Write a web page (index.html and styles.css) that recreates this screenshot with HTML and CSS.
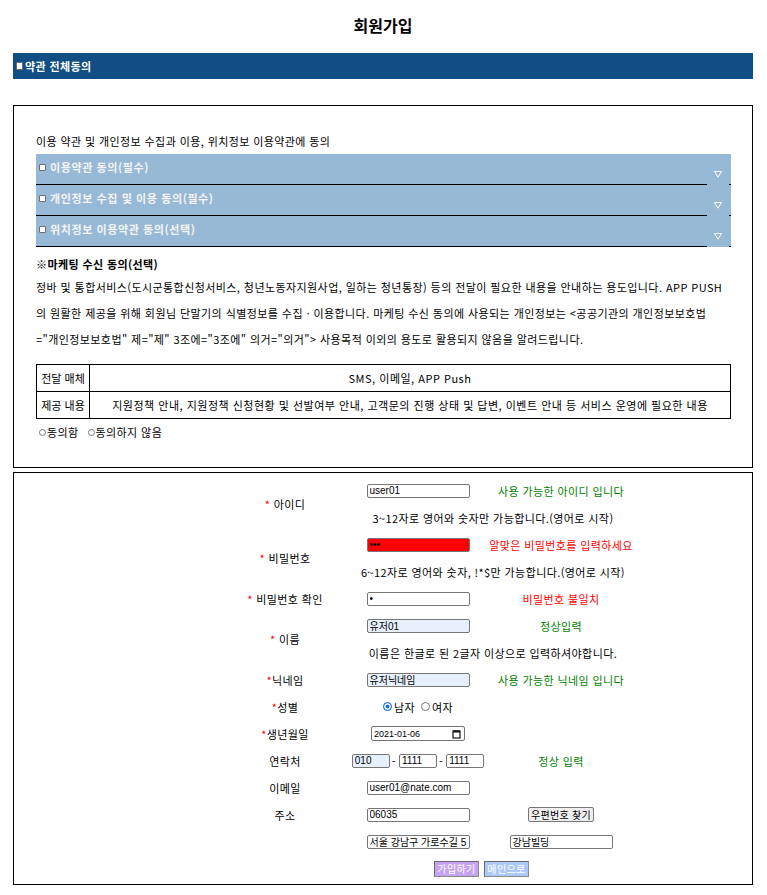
FILE: index.html
```html
<!DOCTYPE html>
<html lang="ko">
<head>
<meta charset="utf-8">
<title>회원가입</title>
<link rel="stylesheet" href="styles.css">
</head>
<body>
<div class="page">
  <h1 class="title">회원가입</h1>

  <div class="allbar">
    <input type="checkbox" class="chk">
    <span>약관 전체동의</span>
  </div>

  <section class="terms">
    <p class="intro">이용 약관 및 개인정보 수집과 이용, 위치정보 이용약관에 동의</p>

    <div class="trow">
      <label class="tlabel"><input type="checkbox" class="chk">이용약관 동의(필수)</label>
      <div class="tarrow"><svg width="8" height="7" viewBox="0 0 8 7"><polygon points="0.5,0.5 7.5,0.5 4,6.2" fill="none" stroke="#ffffff" stroke-width="1"/></svg></div>
    </div>
    <div class="trow">
      <label class="tlabel"><input type="checkbox" class="chk">개인정보 수집 및 이용 동의(필수)</label>
      <div class="tarrow"><svg width="8" height="7" viewBox="0 0 8 7"><polygon points="0.5,0.5 7.5,0.5 4,6.2" fill="none" stroke="#ffffff" stroke-width="1"/></svg></div>
    </div>
    <div class="trow">
      <label class="tlabel"><input type="checkbox" class="chk">위치정보 이용약관 동의(선택)</label>
      <div class="tarrow"><svg width="8" height="7" viewBox="0 0 8 7"><polygon points="0.5,0.5 7.5,0.5 4,6.2" fill="none" stroke="#ffffff" stroke-width="1"/></svg></div>
    </div>

    <p class="mk-title">※마케팅 수신 동의(선택)</p>
    <p class="mk-text">정바 및 통합서비스(도시군통합신청서비스, 청년노동자지원사업, 일하는 청년통장) 등의 전달이 필요한 내용을 안내하는 용도입니다. APP PUSH<br>의 원활한 제공을 위해 회원님 단말기의 식별정보를 수집ㆍ이용합니다. 마케팅 수신 동의에 사용되는 개인정보는 &lt;공공기관의 개인정보보호법<br>="개인정보보호법" 제="제" 3조에="3조에" 의거="의거"&gt; 사용목적 이외의 용도로 활용되지 않음을 알려드립니다.</p>

    <table class="mk-table">
      <tr><th>전달 매체</th><td>SMS, 이메일, APP Push</td></tr>
      <tr><th>제공 내용</th><td>지원정책 안내, 지원정책 신청현황 및 선발여부 안내, 고객문의 진행 상태 및 답변, 이벤트 안내 등 서비스 운영에 필요한 내용</td></tr>
    </table>

    <div class="mk-radio">
      <label><input type="radio" name="mk" class="rad">동의함</label>
      <label><input type="radio" name="mk" class="rad">동의하지 않음</label>
    </div>
  </section>

  <section class="joinbox">
    <div class="fgrid">
      <div class="lbl span2"><span class="req">*</span> 아이디</div>
      <div class="c2"><input type="text" class="inp" value="user01"></div>
      <div class="c3 ok">사용 가능한 아이디 입니다</div>
      <div class="hint">3~12자로 영어와 숫자만 가능합니다.(영어로 시작)</div>

      <div class="lbl span2"><span class="req">*</span> 비밀번호</div>
      <div class="c2"><input type="password" class="inp bad" value="abc"></div>
      <div class="c3 err">알맞은 비밀번호를 입력하세요</div>
      <div class="hint">6~12자로 영어와 숫자, !*$만 가능합니다.(영어로 시작)</div>

      <div class="lbl"><span class="req">*</span> 비밀번호 확인</div>
      <div class="c2"><input type="password" class="inp" value="a"></div>
      <div class="c3 err">비밀번호 불일치</div>

      <div class="lbl span2"><span class="req">*</span> 이름</div>
      <div class="c2"><input type="text" class="inp filled" value="유저01"></div>
      <div class="c3 ok">정상입력</div>
      <div class="hint">이름은 한글로 된 2글자 이상으로 입력하셔야합니다.</div>

      <div class="lbl"><span class="req">*</span>닉네임</div>
      <div class="c2"><input type="text" class="inp filled" value="유저닉네임"></div>
      <div class="c3 ok">사용 가능한 닉네임 입니다</div>

      <div class="lbl"><span class="req">*</span>성별</div>
      <div class="c2 gender">
        <label><input type="radio" name="gender" class="grad" checked>남자</label>
        <label><input type="radio" name="gender" class="grad">여자</label>
      </div>

      <div class="lbl"><span class="req">*</span>생년월일</div>
      <div class="c2">
        <div class="datebox">
          <span class="dateval">2021-01-06</span>
          <svg class="calicon" width="9" height="10" viewBox="0 0 9 10"><rect x="1" y="2" width="7" height="7" fill="none" stroke="#111" stroke-width="1.2"/><rect x="1" y="1.5" width="7" height="2" fill="#111"/></svg>
        </div>
      </div>

      <div class="lbl">연락처</div>
      <div class="c2 phone">
        <input type="text" class="inp short filled" value="010">
        <span class="dash">-</span>
        <input type="text" class="inp short" value="1111">
        <span class="dash">-</span>
        <input type="text" class="inp short" value="1111">
      </div>
      <div class="c3 ok">정상 입력</div>

      <div class="lbl">이메일</div>
      <div class="c2"><input type="text" class="inp" value="user01@nate.com"></div>

      <div class="lbl">주소</div>
      <div class="c2"><input type="text" class="inp" value="06035"></div>
      <div class="c3"><button type="button" class="btn-zip">우편번호 찾기</button></div>

      <div class="c2"><input type="text" class="inp" value="서울 강남구 가로수길 5"></div>
      <div class="c3"><input type="text" class="inp" value="강남빌딩"></div>

      <div class="actions">
        <button type="button" class="btn-act join">가입하기</button>
        <button type="button" class="btn-act main">메인으로</button>
      </div>
    </div>
  </section>
</div>
</body>
</html>
```

FILE: styles.css
```css
* { box-sizing: border-box; }

body {
  margin: 0;
  background: #ffffff;
  color: #000000;
  font-family: "Noto Sans CJK KR", "Noto Sans", sans-serif;
  font-size: 11px;
  letter-spacing: 0.4px;
}

.page {
  margin: 0 14px 0 13px;
}

.title {
  margin: 15px 0 0;
  font-size: 16px;
  line-height: 20px;
  font-weight: bold;
  letter-spacing: 0;
  text-align: center;
}

.allbar {
  margin-top: 18px;
  height: 26px;
  background: #114e83;
  color: #ffffff;
  display: flex;
  align-items: center;
  padding-left: 3px;
  font-size: 11px;
  font-weight: bold;
}

.chk {
  appearance: none;
  -webkit-appearance: none;
  width: 7px;
  height: 8px;
  margin: 0 2px 0 0;
  background: #ffffff;
  border: 1px solid #6f6f6f;
  border-radius: 1px;
  flex: none;
}

.terms {
  margin-top: 26px;
  height: 363px;
  border: 1px solid #000000;
  padding: 26px 21px 0 22px;
}

.intro {
  margin: 0 0 4px;
  line-height: 18px;
}

.trow {
  height: 31px;
  display: flex;
  align-items: flex-start;
  background: #97b9d6;
  border-bottom: 1px solid #000000;
}

.tlabel {
  flex: 1;
  display: flex;
  align-items: center;
  padding: 4px 0 0 3px;
  line-height: 18px;
  color: #f4f4f4;
  font-weight: bold;
  letter-spacing: 0.6px;
}

.tlabel .chk {
  width: 7px;
  height: 7px;
  margin-right: 4px;
}

.tarrow {
  width: 22px;
  height: 31px;
  margin: 0 2px -1px 0;
  background: #97b9d6;
  display: flex;
  justify-content: center;
  padding-top: 17px;
}

.tarrow svg {
  display: block;
}

.mk-title {
  margin: 8px 0 0;
  line-height: 18px;
  font-weight: bold;
}

.mk-text {
  margin: 1px 0 0;
  line-height: 26px;
  white-space: nowrap;
  letter-spacing: 0.42px;
}

.mk-table {
  margin-top: 12px;
  width: 100%;
  border-collapse: collapse;
  letter-spacing: 0.5px;
}

.mk-table th,
.mk-table td {
  border: 1px solid #000000;
  height: 27px;
  padding: 0 3px;
  font-weight: normal;
  text-align: center;
  white-space: nowrap;
}

.mk-table th {
  width: 53px;
  letter-spacing: 0;
}

.mk-radio {
  margin-top: 5px;
  line-height: 16px;
  padding-left: 3px;
  display: flex;
  gap: 9px;
}

.mk-radio label {
  display: flex;
  align-items: center;
}

.rad {
  appearance: none;
  -webkit-appearance: none;
  width: 7px;
  height: 7px;
  margin: 0 1px 0 0;
  border: 1px solid #7a7a7a;
  border-radius: 50%;
  background: #ffffff;
}

.joinbox {
  margin-top: 4px;
  height: 413px;
  border: 1px solid #000000;
  padding-top: 4px;
}

.fgrid {
  margin-left: 206px;
  display: grid;
  grid-template-columns: 130px 136px 150px;
  grid-auto-rows: 27px;
  align-items: center;
}

.lbl {
  grid-column: 1;
  text-align: center;
}

.lbl.span2 {
  grid-row: span 2;
}

.req {
  color: #ff0000;
}

.c2 {
  grid-column: 2;
  display: flex;
  justify-content: center;
  align-items: center;
}

.c3 {
  grid-column: 3;
  display: flex;
  justify-content: center;
  align-items: center;
}

.hint {
  grid-column: 2 / 4;
  text-align: center;
}

.ok { color: #008000; }
.err { color: #ff0000; }

.inp {
  width: 103px;
  height: 14px;
  margin: 0;
  padding: 0 2px;
  border: 1px solid #767676;
  border-radius: 2px;
  background: #ffffff;
  color: #000000;
  font-family: "Liberation Sans", "Noto Sans CJK KR", sans-serif;
  font-size: 10px;
  letter-spacing: 0;
}

.inp.bad {
  background: #ff0000;
}

.inp.filled {
  background: #e8f0fe;
}

.inp.short {
  width: 38px;
}

.dash {
  margin: 0 3px 0 2px;
  line-height: 14px;
}

.gender {
  gap: 6px;
}

.gender label {
  display: flex;
  align-items: center;
}

.grad {
  appearance: none;
  -webkit-appearance: none;
  width: 9px;
  height: 9px;
  margin: 0 2px 0 0;
  border: 1px solid #767676;
  border-radius: 50%;
  background: #ffffff;
}

.grad:checked {
  border-color: #1a73e8;
  background: #1a73e8;
  box-shadow: inset 0 0 0 1.5px #ffffff;
}

.datebox {
  width: 94px;
  height: 15px;
  border: 1px solid #767676;
  border-radius: 2px;
  display: flex;
  align-items: center;
  justify-content: space-between;
  padding: 0 3px 0 2px;
  font-family: "Liberation Sans", sans-serif;
  font-size: 9px;
  letter-spacing: 0;
}

.calicon {
  display: block;
}

.btn-zip {
  width: 66px;
  height: 15px;
  margin: 0;
  padding: 0;
  border: 1px solid #767676;
  border-radius: 2px;
  background: #efefef;
  color: #000000;
  font-family: "Noto Sans CJK KR", sans-serif;
  font-size: 10px;
  line-height: 13px;
  letter-spacing: 0.3px;
}

.actions {
  grid-column: 2 / 4;
  display: flex;
  gap: 5px;
  padding-left: 84px;
}

.btn-act {
  width: 45px;
  height: 16px;
  margin: 0;
  padding: 0;
  border: 1px solid #6a6a6a;
  border-right-color: #8a8a8a;
  border-bottom-color: #8a8a8a;
  color: #ffffff;
  font-family: "Noto Sans CJK KR", sans-serif;
  font-size: 10px;
  line-height: 14px;
  letter-spacing: 0.4px;
}

.btn-act.join { background: #c7a4f3; }
.btn-act.main { background: #adc9f9; }
```
